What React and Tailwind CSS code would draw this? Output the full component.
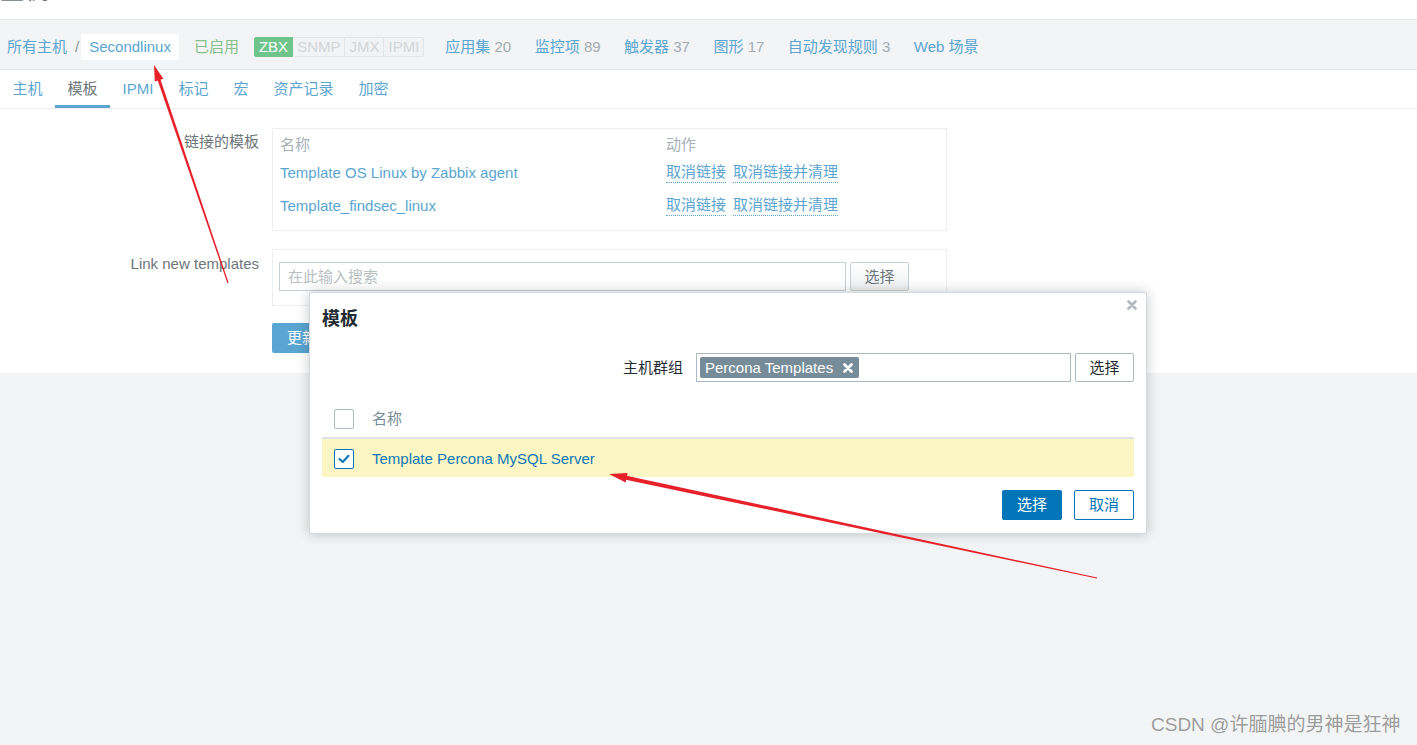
import React from "react";

function XIcon({ className, color, w = 2.6 }) {
  return (
    <svg viewBox="0 0 10 10" className={className}>
      <path d="M1.5 1.5 L8.5 8.5 M8.5 1.5 L1.5 8.5" stroke={color} strokeWidth={w} strokeLinecap="round" fill="none" />
    </svg>
  );
}

function Arrows() {
  return (
    <svg className="absolute left-0 top-0 pointer-events-none" width="1417" height="745" viewBox="0 0 1417 745">
      <polygon points="154,65 163.4,78.8 154.8,81.6" fill="#e62129" />
      <polygon points="159.3,75.9 228.6,282.8 227.4,283.2 156.5,76.9" fill="#e62129" />
      <polygon points="609,474 625.6,482.6 627.6,472.9" fill="#e62129" />
      <polygon points="623.1,474.9 1097.1,577.5 1096.9,578.5 622.3,478.9" fill="#e62129" />
    </svg>
  );
}

export default function App() {
  const tabs = ["主机", "模板", "IPMI", "标记", "宏", "资产记录", "加密"];
  const counts = [
    ["应用集", "20"],
    ["监控项", "89"],
    ["触发器", "37"],
    ["图形", "17"],
    ["自动发现规则", "3"],
  ];
  return (
    <div className="relative w-[1417px] h-[745px] overflow-hidden bg-[#f2f4f5] font-['Liberation_Sans','Noto_Sans_CJK_SC',sans-serif] text-[15px]">
      <div className="bg-white">
        {/* page title, scrolled mostly out of view */}
        <div className="h-[19px] overflow-hidden">
          <div className="-mt-[21px] text-[24px] leading-[24px] text-[#6d767a]">主机</div>
        </div>

        {/* breadcrumb bar */}
        <div className="h-[51px] border-y border-[#e4e7e9] bg-[#f3f4f5] flex items-center pt-[5px] pl-[7px] leading-[20px]">
          <span className="text-[#5aa5d1]">所有主机</span>
          <span className="ml-[8px] text-[#8a9398]">/</span>
          <span className="ml-[2px] h-[26px] px-[8px] bg-white rounded-[2px] flex items-center text-[#5aa5d1]">Secondlinux</span>
          <span className="ml-[15px] text-[#84c087]">已启用</span>
          <div className="ml-[15px] flex h-[20px] text-[15px] leading-[18px]">
            <span className="px-[4px] bg-[#6fc48c] text-white border border-[#6fc48c] rounded-l-[2px]">ZBX</span>
            <span className="px-[4px] text-[#d2d6d9] border-y border-r border-[#e3e6e8] bg-[#f1f3f4]">SNMP</span>
            <span className="px-[4px] text-[#d2d6d9] border-y border-r border-[#e3e6e8] bg-[#f1f3f4]">JMX</span>
            <span className="px-[4px] text-[#d2d6d9] border-y border-r border-[#e3e6e8] bg-[#f1f3f4] rounded-r-[2px]">IPMI</span>
          </div>
          <div className="ml-[21px] flex gap-[23.5px]">
            {counts.map(([a, b]) => (
              <span key={a}>
                <span className="text-[#5aa5d1]">{a}</span>
                <span className="text-[#a3acb2]"> {b}</span>
              </span>
            ))}
            <span className="text-[#5aa5d1]">Web 场景</span>
          </div>
        </div>

        {/* tabs */}
        <div className="h-[39px] border-b border-[#eceef0] flex leading-[20px]">
          {tabs.map((t) => (
            <div
              key={t}
              className={
                t === "模板"
                  ? "px-[12.5px] flex items-center border-b-[3px] border-[#5aa5d1] pt-[3px] text-[#6d767a]"
                  : "px-[12.5px] flex items-center border-b-[3px] border-transparent pt-[3px] text-[#5aa5d1]"
              }
            >
              {t}
            </div>
          ))}
        </div>

        {/* form */}
        <div className="pt-[19px] pb-[20px] leading-[20px]">
          <div className="flex">
            <div className="w-[259px] text-right pt-[4px] text-[#6d767a]">链接的模板</div>
            <div className="ml-[13px] w-[675px] h-[103px] border border-[#eceef0] pt-[5px] px-[7px]">
              <div className="flex h-[22px] items-center text-[#a6b1b8]">
                <span className="w-[386px]">名称</span>
                <span>动作</span>
              </div>
              {["Template OS Linux by Zabbix agent", "Template_findsec_linux"].map((n) => (
                <div key={n} className="flex h-[33px] items-center">
                  <span className="w-[386px] text-[#5aa5d1]">{n}</span>
                  <span className="text-[#5aa5d1] border-b border-dotted border-[#5aa5d1] leading-[20px]">取消链接</span>
                  <span className="ml-[7px] text-[#5aa5d1] border-b border-dotted border-[#5aa5d1] leading-[20px]">取消链接并清理</span>
                </div>
              ))}
            </div>
          </div>

          <div className="flex mt-[18px]">
            <div className="w-[259px] text-right pt-[5px] text-[#6d767a]">Link new templates</div>
            <div className="ml-[13px] w-[675px] h-[57px] border border-[#eceef0] pt-[12px] pl-[6px] flex items-start">
              <div className="w-[567px] h-[29px] border border-[#c8d0d5] bg-white flex items-center pl-[8px] text-[#b9c0c4]">在此输入搜索</div>
              <div className="ml-[4px] w-[59px] h-[29px] border border-[#c8d0d5] rounded-[2px] bg-gradient-to-b from-white to-[#eef0f1] flex items-center justify-center text-[#6d767a]">选择</div>
            </div>
          </div>

          <div className="mt-[17px] ml-[272px] w-[60px] h-[30px] rounded-[2px] bg-[#5aa5d1] text-white flex items-center justify-center">更新</div>
        </div>
      </div>

      {/* modal dialog */}
      <div className="absolute left-[309px] top-[292px] w-[838px] bg-white border border-[#d3dadf] shadow-[0_0_12px_rgba(0,0,0,0.22)] px-[12px] pb-[13px] leading-[20px]">
        <XIcon className="absolute right-[9px] top-[7px] w-[10px] h-[10px]" color="#b0b9bf" />
        <div className="h-[60px] pt-[14px] text-[18px] leading-[24px] font-bold text-[#1f2c33]">模板</div>
        <div className="h-[29px] flex justify-end items-center">
          <span className="mr-[13px] text-[#1f2c33]">主机群组</span>
          <div className="w-[375px] h-[29px] border border-[#acbbc2] flex items-center pl-[3px]">
            <span className="h-[21px] pl-[5px] pr-[6px] bg-[#768d99] rounded-[2px] text-white flex items-center gap-[10px]">
              Percona Templates
              <XIcon className="w-[10px] h-[10px]" color="#ffffff" w={2.8} />
            </span>
          </div>
          <div className="ml-[4px] w-[59px] h-[29px] border border-[#acbbc2] rounded-[2px] bg-white flex items-center justify-center text-[#1f2c33]">选择</div>
        </div>

        <div className="mt-[18px]">
          <div className="h-[39px] border-b-2 border-[#dfe4e7] flex items-center pl-[12px]">
            <span className="w-[20px] h-[20px] border border-[#acbbc2] rounded-[2px] bg-white"></span>
            <span className="ml-[18px] text-[#768d99]">名称</span>
          </div>
          <div className="h-[38px] bg-[#fbf6c4] flex items-center pl-[12px] pt-[1px]">
            <span className="w-[20px] h-[20px] border border-[#0275b8] rounded-[2px] bg-white flex items-center justify-center">
              <svg viewBox="0 0 14 14" className="w-[14px] h-[14px]">
                <path d="M2.5 7 L5.8 10 L11.5 3.8" stroke="#0275b8" strokeWidth="2" fill="none" strokeLinecap="round" strokeLinejoin="round" />
              </svg>
            </span>
            <span className="ml-[18px] text-[#0f78b6]">Template Percona MySQL Server</span>
          </div>
        </div>

        <div className="mt-[13px] flex justify-end gap-[12px]">
          <div className="w-[60px] h-[30px] rounded-[2px] bg-[#0275b8] text-white flex items-center justify-center">选择</div>
          <div className="w-[60px] h-[30px] rounded-[2px] border border-[#0275b8] bg-white text-[#0275b8] flex items-center justify-center">取消</div>
        </div>
      </div>

      <Arrows />

      <div className="absolute left-[1151px] top-[713px] text-[19px] leading-[24px] text-[#9c9c9c] [text-shadow:0_0_1px_rgba(255,255,255,0.8)]">
        CSDN @许腼腆的男神是狂神
      </div>
    </div>
  );
}
